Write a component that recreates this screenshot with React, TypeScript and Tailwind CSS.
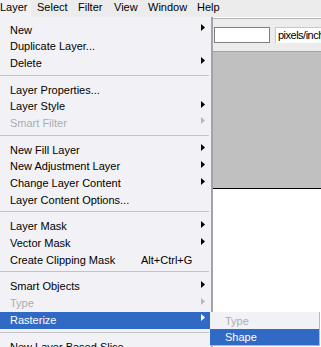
import React from "react";

type Item =
  | { kind: "sep" }
  | {
      kind: "item";
      label: string;
      arrow?: boolean;
      disabled?: boolean;
      active?: boolean;
      shortcut?: string;
    };

const items: Item[] = [
  { kind: "item", label: "New", arrow: true },
  { kind: "item", label: "Duplicate Layer..." },
  { kind: "item", label: "Delete", arrow: true },
  { kind: "sep" },
  { kind: "item", label: "Layer Properties..." },
  { kind: "item", label: "Layer Style", arrow: true },
  { kind: "item", label: "Smart Filter", arrow: true, disabled: true },
  { kind: "sep" },
  { kind: "item", label: "New Fill Layer", arrow: true },
  { kind: "item", label: "New Adjustment Layer", arrow: true },
  { kind: "item", label: "Change Layer Content", arrow: true },
  { kind: "item", label: "Layer Content Options..." },
  { kind: "sep" },
  { kind: "item", label: "Layer Mask", arrow: true },
  { kind: "item", label: "Vector Mask", arrow: true },
  { kind: "item", label: "Create Clipping Mask", shortcut: "Alt+Ctrl+G" },
  { kind: "sep" },
  { kind: "item", label: "Smart Objects", arrow: true },
  { kind: "item", label: "Type", arrow: true, disabled: true },
  { kind: "item", label: "Rasterize", arrow: true, active: true },
  { kind: "sep" },
  { kind: "item", label: "New Layer Based Slice" },
];

function Arrow({ color }: { color: string }) {
  return (
    <svg width="4" height="7" viewBox="0 0 4 7" className="mt-[2.5px] shrink-0">
      <path d="M0 0 L4 3.5 L0 7 Z" fill={color} />
    </svg>
  );
}

function MenuRow({ item }: { item: Item }) {
  if (item.kind === "sep") {
    return (
      <div className="pt-[3px] pb-[6px] pr-[2px]">
        <div className="h-px bg-[#c4c4c8]" />
      </div>
    );
  }
  const text = item.active
    ? "text-white"
    : item.disabled
      ? "text-[#acacb0]"
      : "text-black";
  const arrowColor = item.active ? "#ffffff" : item.disabled ? "#b8b8bc" : "#000000";
  return (
    <div
      className={`flex items-start h-[16.7px] leading-[16.7px] pl-[10px] pr-[6px] whitespace-nowrap ${text} ${
        item.active ? "bg-[#316ac5]" : ""
      }`}
    >
      {item.shortcut ? (
        <>
          <span className="w-[131px]">{item.label}</span>
          <span className="flex-1">{item.shortcut}</span>
        </>
      ) : (
        <span className="flex-1">{item.label}</span>
      )}
      {item.arrow && <Arrow color={arrowColor} />}
    </div>
  );
}

export default function App() {
  return (
    <div
      className="relative w-[321px] h-[347px] overflow-hidden bg-white text-[11px] text-black"
      style={{ fontFamily: '"Liberation Sans", Arial, sans-serif' }}
    >
      {/* menu bar */}
      <div className="flex h-[17px] leading-[15px] bg-[#ececec] whitespace-nowrap">
        <div className="w-[31px] bg-[#f2f2f6]">Layer</div>
        <div className="w-[47px] pl-[6px]">Select</div>
        <div className="w-[36px]">Filter</div>
        <div className="w-[34px]">View</div>
        <div className="w-[49px]">Window</div>
        <div>Help</div>
      </div>

      <div className="flex h-[330px]">
        {/* open Layer menu */}
        <div className="w-[213px] shrink-0 bg-[#f2f2f6] border-r-2 border-[#a4a4a8] pt-[4.5px]">
          {items.map((it, i) => (
            <MenuRow key={i} item={it} />
          ))}
        </div>

        {/* options bar + canvas */}
        <div className="flex-1 flex flex-col">
          <div className="h-[34px] mt-[1px] bg-[#ececec] border-t border-[#b4b4b4] border-b border-b-[#a0a0a0] flex items-start pt-[8px] pl-[1px] gap-[5px]">
            <div className="w-[56px] h-[16px] bg-white border border-[#7f7f7f]" />
            <div className="flex-1 h-[16px] bg-white border-l border-t border-[#c8c8c8] pl-[2px] leading-[15px] tracking-[-0.5px] whitespace-nowrap overflow-hidden">
              pixels/inch
            </div>
          </div>
          <div className="h-[137px] bg-[#c0c0c0] border-b border-black" />
          <div className="flex-1 bg-white" />
        </div>
      </div>

      {/* Rasterize submenu */}
      <div className="absolute left-[210px] top-[312px] w-[110px] bg-[#f2f2f6] border-r border-b border-[#b8b8bc] pt-[1px]">
        <div className="h-[16px] leading-[16px] pl-[15px] text-[#acacb0]">Type</div>
        <div className="h-[16px] leading-[16px] pl-[15px] bg-[#316ac5] text-white">Shape</div>
      </div>
    </div>
  );
}
